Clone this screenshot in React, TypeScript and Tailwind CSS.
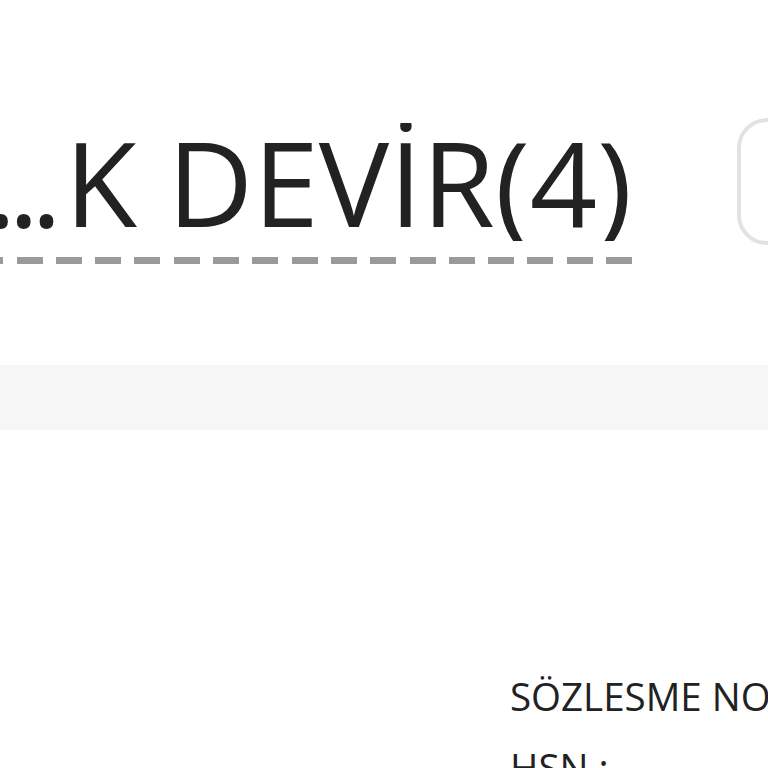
export default function App() {
  return (
    <div className="w-[768px] h-[768px] overflow-hidden bg-white text-[#222] font-['Open_Sans',sans-serif]">
      <div className="flex items-start">
        <div className="w-[632px] shrink-0 pt-[123px]">
          <div className="flex justify-end overflow-hidden">
            <span className="whitespace-nowrap text-[118px] leading-[118px]">
              <span className="tracking-[-0.07em]">...</span>
              <span className="ml-[11px]">K DEVİR(4)</span>
            </span>
          </div>
          <div className="mt-[16px] h-[7px] bg-[repeating-linear-gradient(270deg,#9a9a9a_0_26px,transparent_26px_39.3px)]" />
        </div>
        <div className="ml-[105px] mt-[118px] w-[200px] h-[127px] shrink-0 rounded-[30px] border-[4px] border-[#e2e2e2]" />
      </div>
      <div className="mt-[101px] h-[65px] bg-[#f6f6f6]" />
      <div className="pl-[510px] pt-[231px] text-[38.5px] leading-[71px] whitespace-nowrap">
        <p>SÖZLESME NO</p>
        <p>HSN :</p>
      </div>
    </div>
  );
}
